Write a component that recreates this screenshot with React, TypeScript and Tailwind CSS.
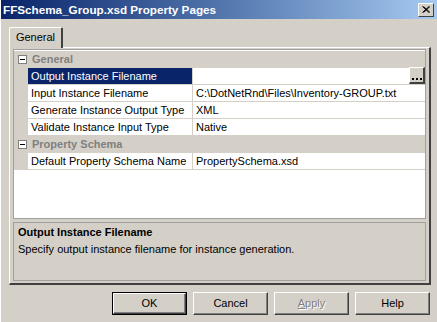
const rowsGeneral = [
  { name: "Output Instance Filename", value: "", selected: true },
  { name: "Input Instance Filename", value: "C:\\DotNetRnd\\Files\\Inventory-GROUP.txt" },
  { name: "Generate Instance Output Type", value: "XML" },
  { name: "Validate Instance Input Type", value: "Native" },
];

const rowsSchema = [{ name: "Default Property Schema Name", value: "PropertySchema.xsd" }];

function Category({ label }: { label: string }) {
  return (
    <div className="flex h-[17px] items-center bg-[#d4d0c8]">
      <div className="flex w-[15px] justify-center pl-[1px]">
        <div className="relative h-[9px] w-[9px] border border-[#808080] bg-white">
          <div className="absolute left-[1px] top-[3px] h-[1px] w-[5px] bg-black" />
        </div>
      </div>
      <span className="pl-[3px] font-bold text-[#808080]">{label}</span>
    </div>
  );
}

function Row({ name, value, selected }: { name: string; value: string; selected?: boolean }) {
  return (
    <div className="flex h-[17px] bg-[#d4d0c8]">
      <div className="w-[14px]" />
      <div
        className={`w-[165px] border-r border-b border-[#d4d0c8] pl-[3px] leading-[16px] whitespace-nowrap ${
          selected ? "bg-[#0a246a] text-white" : "bg-white text-black"
        }`}
      >
        {name}
      </div>
      <div className="relative flex-1 border-b border-[#d4d0c8] bg-white pl-[3px] leading-[16px] whitespace-nowrap">
        {value}
        {selected && (
          <div className="absolute right-0 top-[-1px] flex h-[17px] w-[16px] items-end justify-center border-t border-l border-r-2 border-b-2 border-t-white border-l-white border-r-[#404040] border-b-[#404040] bg-[#d4d0c8] pb-[2px]">
            <svg width="10" height="2" viewBox="0 0 10 2">
              <rect x="0" y="0" width="2" height="2" fill="black" />
              <rect x="4" y="0" width="2" height="2" fill="black" />
              <rect x="8" y="0" width="2" height="2" fill="black" />
            </svg>
          </div>
        )}
      </div>
    </div>
  );
}

function Button({ label, isDefault, disabled }: { label: React.ReactNode; isDefault?: boolean; disabled?: boolean }) {
  return (
    <div className={`h-[23px] w-[75px] ${isDefault ? "border border-black" : ""}`}>
      <div
        className={`flex h-full w-full items-center justify-center border-t border-l border-r border-b border-t-white border-l-white border-r-[#404040] border-b-[#404040] shadow-[inset_-1px_-1px_0_#808080] ${
          disabled ? "text-[#808080] [text-shadow:1px_1px_0_#ffffff]" : "text-black"
        }`}
      >
        {label}
      </div>
    </div>
  );
}

export default function App() {
  return (
    <div className="flex h-[322px] w-[437px] flex-col border-l border-l-[#ffffff] bg-[#d4d0c8] font-['Liberation_Sans',Arial,sans-serif] text-[11px] text-black">
      <div className="flex h-[19px] shrink-0 items-center justify-between bg-gradient-to-r from-[#0a246a] to-[#a6caf0] pl-[2px] pr-[3px]">
        <span className="text-[11.7px] font-bold text-white">FFSchema_Group.xsd Property Pages</span>
        <div className="flex h-[14px] w-[16px] items-center justify-center border-t border-l border-r border-b border-t-white border-l-white border-r-[#404040] border-b-[#404040] bg-[#d4d0c8]">
          <svg width="8" height="7" viewBox="0 0 8 7">
            <path d="M0.5 0.5 L7 6.5 M1.5 0.5 L8 6.5 M7 0.5 L0.5 6.5 M8 0.5 L1.5 6.5" stroke="black" strokeWidth="1" />
          </svg>
        </div>
      </div>

      <div className="flex flex-col pl-[8px] pr-[6px] pt-[8px]">
        <div className="flex">
          <div className="relative z-10 -mb-[1px] flex h-[21px] w-[54px] items-center justify-center rounded-t-[2px] border-t border-l border-r-2 border-t-white border-l-white border-r-[#404040] bg-[#d4d0c8] pb-[1px]">
            General
          </div>
        </div>

        <div className="flex h-[238px] flex-col border-t border-l border-r-2 border-b-2 border-t-white border-l-white border-r-[#404040] border-b-[#404040] px-[3px] pt-[1px]">
          <div className="flex h-[170px] flex-col border border-[#a0a0a0] bg-white pt-[1px]">
            <Category label="General" />
            {rowsGeneral.map((r) => (
              <Row key={r.name} {...r} />
            ))}
            <Category label="Property Schema" />
            {rowsSchema.map((r) => (
              <Row key={r.name} {...r} />
            ))}
          </div>

          <div className="mt-[3px] flex h-[59px] flex-col border border-[#a0a0a0] px-[4px] pt-[2px]">
            <span className="font-bold leading-[15px]">Output Instance Filename</span>
            <span className="mt-[2px] leading-[14px]">Specify output instance filename for instance generation.</span>
          </div>
        </div>

        <div className="mt-[7px] flex justify-end gap-[6px] pr-[1px]">
          <Button label="OK" isDefault />
          <Button label="Cancel" />
          <Button
            label={
              <span>
                <span className="underline">A</span>pply
              </span>
            }
            disabled
          />
          <Button label="Help" />
        </div>
      </div>
    </div>
  );
}
